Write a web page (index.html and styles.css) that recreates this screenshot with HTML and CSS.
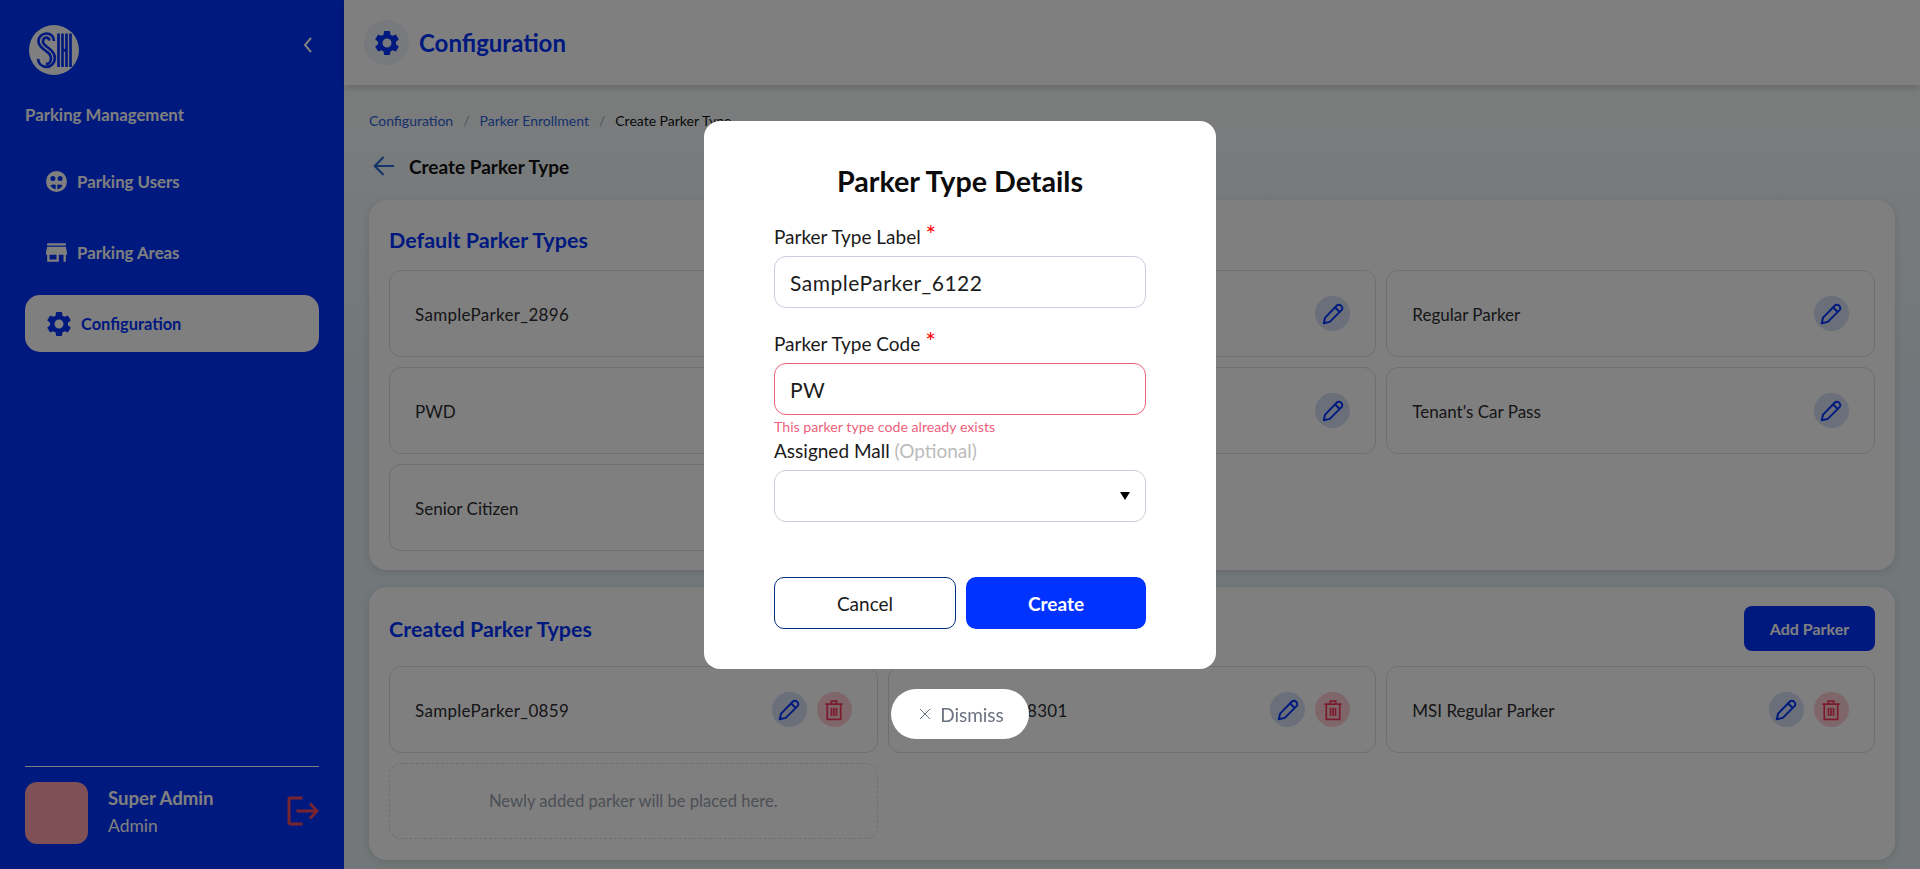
FILE: index.html

```html
<!DOCTYPE html>
<html lang="en">
  <head>
    <meta charset="UTF-8">
    <meta name="viewport" content="width=device-width, initial-scale=1">
    <title>Create Parker Type</title>
    <link rel="stylesheet" href="styles.css">
  </head>
  <body>
    <svg class="sprite" aria-hidden="true">
      <symbol id="gear" viewBox="0 0 24 24">
        <path d="M19.14 12.94c.04-.3.06-.61.06-.94 0-.32-.02-.64-.07-.94l2.03-1.58c.18-.14.23-.41.12-.61l-1.92-3.32c-.12-.22-.37-.29-.59-.22l-2.39.96c-.5-.38-1.03-.7-1.62-.94l-.36-2.54c-.04-.24-.24-.41-.48-.41h-3.84c-.24 0-.43.17-.47.41l-.36 2.54c-.59.24-1.13.57-1.62.94l-2.39-.96c-.22-.08-.47 0-.59.22L2.74 8.87c-.12.21-.08.47.12.61l2.03 1.58c-.05.3-.09.63-.09.94s.02.64.07.94l-2.03 1.58c-.18.14-.23.41-.12.61l1.92 3.32c.12.22.37.29.59.22l2.39-.96c.5.38 1.03.7 1.62.94l.36 2.54c.05.24.24.41.48.41h3.84c.24 0 .44-.17.47-.41l.36-2.54c.59-.24 1.13-.56 1.62-.94l2.39.96c.22.08.47 0 .59-.22l1.92-3.32c.12-.22.07-.47-.12-.61l-2.01-1.58zM12 15.6c-1.98 0-3.6-1.62-3.6-3.6s1.62-3.6 3.6-3.6 3.6 1.62 3.6 3.6-1.62 3.6-3.6 3.6z"/>
      </symbol>
      <symbol id="pencil" viewBox="0 0 24 24">
        <path d="M3.500 20.500l1.200-5.200L15.600 4.200c1-1 2.700-1 3.800.1l.4.4c1 1 1.100 2.700.1 3.700L9 19.300z M14 6l4.200 4.200" fill="none" stroke="currentColor" stroke-width="1.800" stroke-linejoin="round"/>
      </symbol>
      <symbol id="trash" viewBox="0 0 24 24">
        <path d="M4 6.500h16M9.500 6V3.800h5V6M5.800 6.500v14.200h12.400V6.500M9.700 10v7.600M12 10v7.600M14.300 10v7.600" fill="none" stroke="currentColor" stroke-width="1.600"/>
      </symbol>
    </svg>

    <div class="app">
      <aside class="sidebar">
        <div class="brand">
          <svg class="logo" viewBox="0 0 50 50">
            <circle cx="25" cy="25" r="25" fill="#fff"/>
            <g fill="none" stroke="#0033ff" stroke-width="2.700">
              <path d="M25 16c-.4-4.500-3.400-7.500-7.500-7.500-4.500 0-8 3.200-8 7.700 0 4 2.600 6.200 6.200 8.800 3.600 2.600 6.300 4.600 6.300 8.200 0 3.300-2.200 5.900-5.200 5.900"/>
              <path d="M20.500 15.500c-.4-1.700-1.500-2.800-3.100-2.800-2 0-3.500 1.600-3.500 3.700 0 2.600 2.100 4 5 6.100 4 2.900 7 5.500 7 10.400 0 5-3.800 9-8.600 9-4.500 0-7.800-3.400-8.300-8"/>
              <path d="M29.500 8.500v33.500M33.500 8.500v33.500M37.500 8.500v33.500M41.500 8.500v33.500M33.500 8.500v13c0 2.800.8 4 2 4s2-1.200 2-4v-13"/>
            </g>
          </svg>
          <svg class="collapse" viewBox="0 0 12 20"><path d="M9 3L3 10l6 7" fill="none" stroke="currentColor" stroke-width="2"/></svg>
        </div>

        <h2 class="nav-title">Parking Management</h2>
        <nav class="nav">
          <a class="nav-item">
            <svg class="nav-icon" viewBox="0 0 21 21">
              <circle cx="10.500" cy="10.500" r="10.500" fill="currentColor"/>
              <g fill="#0033ff">
                <circle cx="6.900" cy="7.600" r="2.500"/>
                <circle cx="14.100" cy="7.600" r="2.500"/>
                <path d="M4.500 14.500c1.500-1 3.500-1.200 5.200-.6V18.300C7.500 18 5.700 16.500 4.500 14.500z"/>
                <path d="M16.500 14.500c-1.500-1-3.500-1.200-5.200-.6V18.300C13.500 18 15.300 16.500 16.500 14.500z"/>
              </g>
            </svg>
            <span>Parking Users</span>
          </a>
          <a class="nav-item">
            <svg class="nav-icon" viewBox="3 4 18 16"><path d="M20 4H4v2h16V4zm1 10v-2l-1-5H4l-1 5v2h1v6h10v-6h4v6h2v-6h1zm-9 4H6v-4h6v4z"/></svg>
            <span>Parking Areas</span>
          </a>
          <a class="nav-item active">
            <svg class="nav-icon"><use href="#gear"/></svg>
            <span>Configuration</span>
          </a>
        </nav>

        <div class="account">
          <div class="avatar"></div>
          <div class="who">
            <strong>Super Admin</strong>
            <span>Admin</span>
          </div>
          <svg class="logout" viewBox="0 0 32 30"><path d="M15.500 2H3.500a1.500 1.500 0 0 0-1.500 1.500v23a1.500 1.500 0 0 0 1.500 1.500h12M9.500 15h20M23 7.500l7 7.500-7 7.500" fill="none" stroke="currentColor" stroke-width="3"/></svg>
        </div>
      </aside>

      <div class="main">
        <header class="topbar">
          <span class="topbar-icon"><svg><use href="#gear"/></svg></span>
          <h1>Configuration</h1>
        </header>

        <div class="content">
          <div class="crumbs">
            <a>Configuration</a><i>/</i><a>Parker Enrollment</a><i>/</i><span>Create Parker Type</span>
          </div>
          <div class="back">
            <svg viewBox="0 0 22 22"><path d="M21 11H2M10.500 2L1.800 11l8.700 9" fill="none" stroke="currentColor" stroke-width="2.200"/></svg>
            <span>Create Parker Type</span>
          </div>

          <section class="card">
            <div class="card-head"><h3>Default Parker Types</h3></div>
            <div class="tiles">
              <div class="tile"><span class="code">SampleParker_2896</span><div class="tile-actions"><button class="round edit"><svg><use href="#pencil"/></svg></button></div></div>
              <div class="tile"><span>Employee</span><div class="tile-actions"><button class="round edit"><svg><use href="#pencil"/></svg></button></div></div>
              <div class="tile"><span>Regular Parker</span><div class="tile-actions"><button class="round edit"><svg><use href="#pencil"/></svg></button></div></div>
              <div class="tile"><span>PWD</span><div class="tile-actions"><button class="round edit"><svg><use href="#pencil"/></svg></button></div></div>
              <div class="tile"><span>VIP</span><div class="tile-actions"><button class="round edit"><svg><use href="#pencil"/></svg></button></div></div>
              <div class="tile"><span>Tenant's Car Pass</span><div class="tile-actions"><button class="round edit"><svg><use href="#pencil"/></svg></button></div></div>
              <div class="tile"><span>Senior Citizen</span><div class="tile-actions"><button class="round edit"><svg><use href="#pencil"/></svg></button></div></div>
            </div>
          </section>

          <section class="card created">
            <div class="card-head">
              <h3>Created Parker Types</h3>
              <button class="add">Add Parker</button>
            </div>
            <div class="tiles">
              <div class="tile"><span class="code">SampleParker_0859</span><div class="tile-actions"><button class="round edit"><svg><use href="#pencil"/></svg></button><button class="round del"><svg><use href="#trash"/></svg></button></div></div>
              <div class="tile"><span class="code">SampleParker_8301</span><div class="tile-actions"><button class="round edit"><svg><use href="#pencil"/></svg></button><button class="round del"><svg><use href="#trash"/></svg></button></div></div>
              <div class="tile"><span>MSI Regular Parker</span><div class="tile-actions"><button class="round edit"><svg><use href="#pencil"/></svg></button><button class="round del"><svg><use href="#trash"/></svg></button></div></div>
              <div class="tile empty">Newly added parker will be placed here.</div>
            </div>
          </section>
        </div>
      </div>
    </div>

    <div class="overlay">
      <form class="modal">
        <h2>Parker Type Details</h2>
        <label class="field-label">Parker Type Label <em>*</em></label>
        <div class="input">SampleParker_6122</div>
        <label class="field-label second">Parker Type Code <em>*</em></label>
        <div class="input invalid">PW</div>
        <p class="error">This parker type code already exists</p>
        <label class="field-label">Assigned Mall <small>(Optional)</small></label>
        <div class="input select"><b></b></div>
        <div class="modal-actions">
          <button type="button" class="btn cancel">Cancel</button>
          <button type="button" class="btn create">Create</button>
        </div>
      </form>
      <button class="dismiss">
        <svg viewBox="0 0 12 12"><path d="M1 1l10 10M11 1L1 11" fill="none" stroke="currentColor" stroke-width="1"/></svg>
        Dismiss
      </button>
    </div>
  </body>
</html>
```

FILE: styles.css

```css
* {
  box-sizing: border-box;
}

html, body {
  height: 100%;
}

body {
  margin: 0;
  overflow: hidden;
  font-family: "Lato", "Noto Sans", sans-serif;
  color: #111;
}

h1, h2, h3, p {
  margin: 0;
}

button {
  font-family: inherit;
  border: 0;
}

.sprite {
  width: 0;
  height: 0;
  position: absolute;
}

.app {
  display: flex;
  height: 100%;
}

/* sidebar */
.sidebar {
  width: 344px;
  flex: none;
  display: flex;
  flex-direction: column;
  padding: 25px;
  background: #0033ff;
  color: #fff;
}

.brand {
  display: flex;
  justify-content: space-between;
  padding: 0 0 0 4px;
  height: 50px;
}

.logo {
  width: 50px;
  height: 50px;
}

.collapse {
  width: 12px;
  height: 20px;
  margin: 10px 5px 0 0;
}

.nav-title {
  margin-top: 30px;
  font-size: 16.800px;
  line-height: 20px;
  font-weight: 700;
}

.nav {
  display: flex;
  flex-direction: column;
  margin-top: 28px;
  gap: 14px;
}

.nav-item {
  display: flex;
  align-items: center;
  gap: 10px;
  height: 57px;
  padding-left: 21px;
  border-radius: 15px;
  font-size: 16.800px;
  font-weight: 700;
}

.nav-icon {
  width: 21px;
  height: 21px;
  fill: currentColor;
}

.nav-item.active {
  background: #fff;
  color: #0033ff;
  font-size: 16.400px;
}

.nav-item.active .nav-icon {
  width: 30px;
  height: 30px;
  margin: 0 -2.500px;
}

.account {
  display: flex;
  align-items: center;
  margin-top: auto;
  padding-top: 15px;
  border-top: 1px solid #fff;
}

.avatar {
  width: 63px;
  height: 62px;
  border-radius: 12px;
  background: #ffa0aa;
}

.who {
  display: flex;
  flex-direction: column;
  gap: 7px;
  margin-left: 20px;
  margin-bottom: 3px;
  font-size: 17.500px;
}

.who strong {
  font-size: 18.600px;
  line-height: 20px;
  font-weight: 700;
}

.logout {
  width: 32px;
  height: 30px;
  margin-left: auto;
  margin-bottom: 4px;
  color: #f24a5f;
}

/* main column */
.main {
  flex: 1;
  min-width: 0;
  display: flex;
  flex-direction: column;
  background: linear-gradient(180deg, #fbfbfb 0%, #e3eff4 45%, #e6eff2 100%);
}

.topbar {
  height: 85px;
  flex: none;
  display: flex;
  align-items: center;
  gap: 10px;
  padding-left: 20px;
  background: #fff;
  box-shadow: 0 2px 8px rgba(0, 0, 0, 0.2);
}

.topbar-icon {
  width: 45px;
  height: 45px;
  display: flex;
  align-items: center;
  justify-content: center;
  border-radius: 50%;
  background: #f0f2f8;
}

.topbar-icon svg {
  width: 30px;
  height: 30px;
  fill: #0033ff;
}

.topbar h1 {
  font-size: 24px;
  font-weight: 700;
  color: #0033ff;
}

.content {
  padding: 27px 25px 0;
}

.crumbs {
  display: flex;
  font-size: 14px;
  line-height: 18px;
  color: #111;
}

.crumbs a {
  color: #2a62d8;
}

.crumbs i {
  margin: 0 10px;
  font-style: normal;
  color: #aaa;
}

.back {
  display: flex;
  align-items: center;
  gap: 14px;
  height: 22px;
  margin-top: 25px;
  font-size: 19px;
  font-weight: 700;
}

.back svg {
  width: 22px;
  height: 22px;
  margin-left: 4px;
  color: #2a6bd8;
}

.card {
  margin-top: 23px;
  padding: 20px 20px 19px;
  border-radius: 18px;
  background: #fff;
  box-shadow: 0 2px 8px rgba(0, 0, 0, 0.12);
}

.card.created {
  margin-top: 17px;
  padding-top: 19px;
  padding-bottom: 21px;
}

.card-head {
  display: flex;
  align-items: center;
  justify-content: space-between;
  height: 40px;
  margin-bottom: 10px;
}

.created .card-head {
  height: 45px;
  margin-bottom: 15px;
}

.card-head h3 {
  font-size: 21.500px;
  font-weight: 700;
  color: #0033ff;
}

.add {
  width: 131px;
  height: 45px;
  border-radius: 8px;
  background: #0033ff;
  color: #fff;
  font-size: 16px;
  font-weight: 700;
}

.tiles {
  display: grid;
  grid-template-columns: repeat(3, 1fr);
  gap: 10px;
}

.tile {
  height: 87px;
  display: flex;
  align-items: center;
  justify-content: space-between;
  padding: 0 25px;
  border: 1px solid #dcdde6;
  border-radius: 12px;
  font-size: 17px;
  color: #2c2c30;
}

.tile > span {
  padding-top: 1px;
}

.code {
  letter-spacing: 0.300px;
}

.tile-actions {
  display: flex;
  gap: 10px;
}

.round {
  width: 35px;
  height: 35px;
  padding: 0;
  display: flex;
  align-items: center;
  justify-content: center;
  border-radius: 50%;
}

.round svg {
  width: 26px;
  height: 26px;
}

.round.edit {
  background: #d5def5;
  color: #0033ff;
}

.round.del {
  background: #ffccd4;
  color: #f5395a;
}

.tile.empty {
  height: 76px;
  justify-content: center;
  border: 1px dashed #dcdde6;
  font-size: 16.600px;
  color: #9a9fac;
}

/* dialog */
.overlay {
  position: fixed;
  inset: 0;
  display: flex;
  flex-direction: column;
  align-items: center;
  padding-top: 121px;
  background: rgba(0, 0, 0, 0.5);
}

.modal {
  width: 512px;
  height: 548px;
  padding: 42px 70px 0;
  border-radius: 16px;
  background: #fff;
}

.modal h2 {
  font-size: 28.700px;
  line-height: 36px;
  font-weight: 700;
  text-align: center;
  color: #0c0c0c;
}

.field-label {
  display: block;
  margin-top: 27px;
  margin-bottom: 8px;
  font-size: 19px;
  line-height: 22px;
  color: #1a1a1a;
}

.field-label.second {
  margin-top: 25px;
}

.field-label em {
  font-size: 25px;
  line-height: 0;
  font-style: normal;
  color: #f00;
}

.field-label small {
  font-size: 19px;
  color: #bbb;
}

.error + .field-label {
  margin-top: 3px;
}

.input {
  height: 52px;
  display: flex;
  align-items: center;
  padding: 0 15px;
  border: 1px solid #cbcddf;
  border-radius: 12px;
  font-size: 21px;
  letter-spacing: 0.500px;
  color: #1c1c1c;
}

.input.invalid {
  border-color: #ee5f7c;
}

.error {
  height: 22px;
  padding-top: 3px;
  font-size: 14.200px;
  line-height: 17px;
  color: #ee5f7c;
}

.select {
  justify-content: flex-end;
  padding-right: 15px;
}

.select b {
  width: 0;
  height: 0;
  border: 5px solid transparent;
  border-top: 8px solid #000;
  border-bottom: 0;
}

.modal-actions {
  display: flex;
  gap: 10px;
  margin-top: 55px;
}

.btn {
  flex: 1;
  height: 52px;
  border-radius: 10px;
  font-size: 19px;
}

.btn.cancel {
  border: 1px solid #003080;
  background: #fff;
  color: #1a1a1a;
}

.btn.create {
  background: #0033ff;
  color: #fff;
  font-weight: 700;
}

.dismiss {
  display: flex;
  align-items: center;
  gap: 9px;
  height: 50px;
  margin-top: 20px;
  padding: 0 25px 0 28px;
  border-radius: 25px;
  background: #fff;
  color: #6b7280;
  font-size: 19px;
}

.dismiss svg {
  width: 12px;
  height: 12px;
}
```
